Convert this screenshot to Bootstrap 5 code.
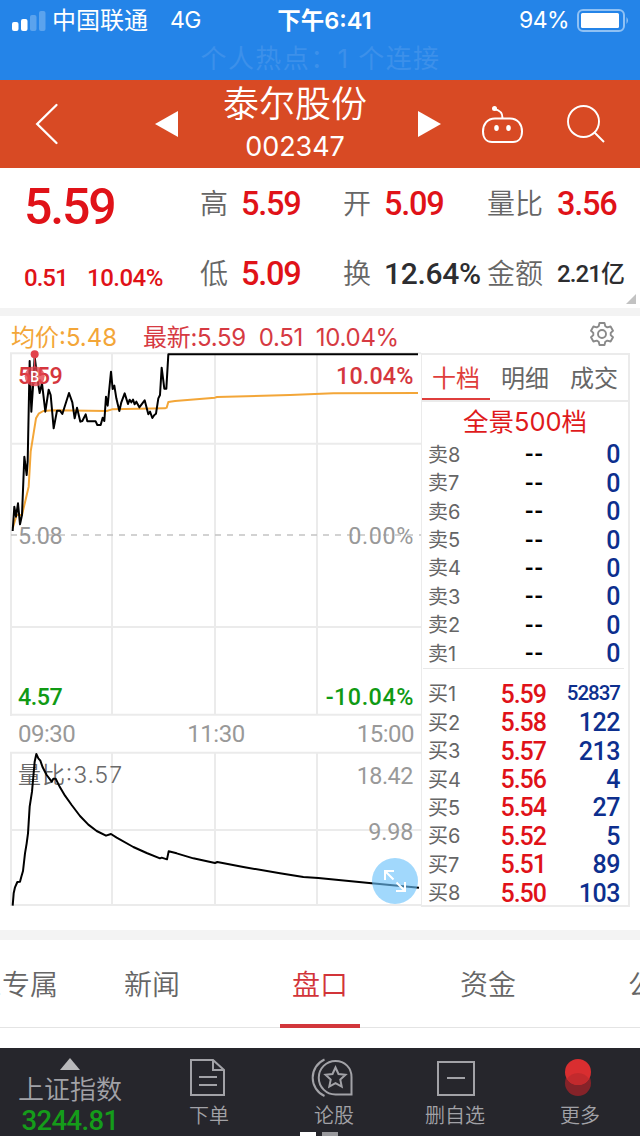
<!DOCTYPE html>
<html lang="zh-CN">
<head>
<meta charset="utf-8">
<meta name="viewport" content="width=device-width, initial-scale=1">
<title>泰尔股份 002347</title>
<link href="https://cdn.jsdelivr.net/npm/bootstrap@5.3.0/dist/css/bootstrap.min.css" rel="stylesheet">
<style>
  body{width:640px;height:1136px;font-family:Inter,"Noto Sans CJK SC",sans-serif;line-height:1;color:#666}
  svg{display:block;overflow:visible}
  .din{font-family:Roboto,"Noto Sans CJK SC",sans-serif;font-weight:500}
  .status-bar{height:80px;background:#2484e8;color:#fff;font-size:23px}
  .status-row{height:40px;padding:1px 12px 0;display:grid;grid-template-columns:263px 99px 1fr}
  .carrier{font-size:24px;margin-left:6px}
  .network{margin-left:22px;letter-spacing:-.5px}
  .clock{font-weight:600;font-size:23.5px}
  .charge{margin-right:8px;letter-spacing:-.6px}
  .hotspot{font-size:26px;color:#3c90ea;height:36px;line-height:38px;letter-spacing:1.4px;padding-left:1px}
  .stock-nav{height:88px;background:#d84a24;display:grid;grid-template-columns:155px 65px 150px 112px 85px 73px;padding:0}
  .stock-name{font-size:36px;height:46px;line-height:48px;font-weight:350}
  .stock-code{font-size:27px;height:40px;line-height:41px;letter-spacing:-.1px}
  .quote{height:140px;display:grid;grid-template-columns:200px 143px 144px 153px;grid-template-rows:70px 70px;align-items:center}
  .quote .cell{display:grid;grid-template-columns:41px 1fr;align-items:center;white-space:nowrap;font-size:28px;font-weight:350;padding-top:2px}
  .quote .wide{grid-template-columns:70px 1fr}
  .quote .val{font-size:32.5px;letter-spacing:-1.2px}
  .up{color:#e01218}
  .last{font-size:50px;letter-spacing:-2.2px}
  .chg{font-size:24px;letter-spacing:-.5px;padding-top:9px}
  .band{background:#f3f3f3}
  .legend{height:37px;font-size:24px;padding:6px 26px 0 11px;white-space:nowrap;letter-spacing:-.3px}
  .charts{width:421px;height:554px}
  .time-axis{height:37px;padding:0 7px 0 18px;font-family:Roboto,sans-serif;font-size:24px;letter-spacing:-.5px;color:#999;line-height:37px;font-weight:400}
  .book{width:209px;height:554px;border:2px solid #ebebeb;border-left-width:1px}
  .book-tabs{height:47px;border-bottom:2px solid #ebebeb;font-size:24px;display:grid;grid-template-columns:68px 70px 1fr}
  .book-tabs>div{line-height:47px;height:47px;text-align:center}
  .book-tabs .on{color:#df3e3c;border-bottom:2px solid #df3e3c;height:45px}
  .full{height:38px;line-height:40px;font-size:25.5px;color:#df1a1c;font-weight:400}
  .level{height:28.45px;display:grid;grid-template-columns:44px 73px 1fr;align-items:center;padding:1px 9px 0 6px;font-size:20px}
  .level .din{font-size:25px;text-align:right;letter-spacing:-1px;margin-right:-1px}
  .level .din.text-black{letter-spacing:1px;margin-right:1px}
  .level .vol{color:#0d2f8e;letter-spacing:-.5px}
  .level .vol.long{font-size:20.5px;letter-spacing:-1px;padding-bottom:1px}
  .asks{border-bottom:1px solid #e8e8e8;margin:0 4px 0 1px;}
  .asks .level{padding:1px 5px 0 5px}
  .bids{padding-top:11px}
  .section-tabs{height:88px;border-bottom:1px solid #e4e4e4;font-size:28px;font-weight:350;margin-left:-100px;width:840px}
  .section-tabs>div{width:168px;line-height:90px;height:88px;text-align:center}
  .section-tabs .on{color:#d23439;position:relative}
  .section-tabs .on::after{content:"";position:absolute;left:44px;right:44px;bottom:0;height:4px;background:#d2363b}
  .dock{height:88px;background:#26262c;color:#a2a2a7;display:grid;grid-template-columns:140px 138px 112px 130px 120px;position:relative;font-size:20px;font-weight:350}
  .dock .item{padding-top:9px;display:flex;flex-direction:column;align-items:center}
  .dock .item svg{height:40px;margin-bottom:9px}
  .index-name{font-size:26px;line-height:30px}
  .index-val{font-size:27.5px;line-height:31px;color:#159c1a;letter-spacing:-.6px}
  .pager{position:absolute;left:300px;bottom:0;gap:6px}
  .pager i{width:16px;height:4px;background:#fff}
  .pager i+i{background:#98989c}
  svg text{font-family:Roboto,"Noto Sans CJK SC",sans-serif;font-size:70px}
</style>
</head>
<body class="bg-white overflow-hidden m-0">

<header>
  <div class="status-bar">
    <div class="status-row align-items-center">
      <div class="d-flex align-items-center">
        <svg width="34" height="22" viewBox="0 0 34 22" fill="#fff"><rect y="12" width="6.500" height="9" rx="2"/><rect x="9" y="9" width="6.500" height="12" rx="2"/><g opacity=".25"><rect x="18" y="5" width="6.500" height="16" rx="2"/><rect x="27" y="1" width="6.500" height="20" rx="2"/></g></svg>
        <span class="carrier">中国联通</span><span class="network">4G</span>
      </div>
      <div class="text-center text-nowrap clock">下午6:41</div>
      <div class="d-flex align-items-center justify-content-end">
        <span class="charge">94%</span>
        <svg width="51" height="23" viewBox="0 0 51 23"><rect x="1" y="1" width="46" height="21" rx="5" fill="none" stroke="#8fc1f4" stroke-width="2"/><rect x="4" y="4" width="38" height="15" rx="1.500" fill="#fff"/><path d="M49.500 8q3 3.500 0 7z" fill="#8fc1f4"/></svg>
      </div>
    </div>
    <div class="hotspot text-center">个人热点：1 个连接</div>
  </div>

  <nav class="stock-nav navbar text-white align-items-center">
    <svg style="margin-left:36px" width="22" height="40" viewBox="0 0 22 40" fill="none" stroke="#fff" stroke-width="2.300" stroke-linecap="round"><path d="M20.500 1 1.200 20 20.500 39"/></svg>
    <svg width="23" height="26" viewBox="0 0 23 26" fill="#fff"><path d="M23 0v26L0 13z"/></svg>
    <div class="text-center h-100">
      <div class="stock-name">泰尔股份</div>
      <div class="stock-code">002347</div>
    </div>
    <svg style="margin-left:48px" width="23" height="26" viewBox="0 0 23 26" fill="#fff"><path d="M0 0v26l23-13z"/></svg>
    <svg width="41" height="38" viewBox="0 0 41 38" fill="none" stroke="#fff" stroke-width="2"><path d="M13 13.500h15c8 0 12 6 12 13 0 7-4 10.500-9 10.500H10c-5 0-9-3.500-9-10.500 0-7 4-13 12-13zM20.500 13c0-5-2-7.500-8-9"/><circle cx="12.500" cy="3.500" r="2.500" fill="#fff" stroke="none"/><g fill="#fff" stroke="none"><ellipse cx="14.500" cy="23" rx="2.300" ry="3"/><ellipse cx="26.500" cy="23" rx="2.300" ry="3"/></g></svg>
    <svg width="38" height="38" viewBox="0 0 38 38" fill="none" stroke="#fff" stroke-width="1.900"><circle cx="16.500" cy="16.500" r="15.500"/><path d="m27 27 10 10"/></svg>
  </nav>
</header>

<main>
  <section class="quote">
    <div class="up din last" style="padding:8px 0 0 24px">5.59</div>
    <div class="cell"><span>高</span><span class="din val up">5.59</span></div>
    <div class="cell"><span>开</span><span class="din val up">5.09</span></div>
    <div class="cell wide"><span>量比</span><span class="din val up">3.56</span></div>
    <div class="up din chg d-flex"><span style="margin-left:24px;width:63px;letter-spacing:-1px">0.51</span><span>10.04%</span></div>
    <div class="cell"><span>低</span><span class="din val up">5.09</span></div>
    <div class="cell"><span>换</span><span class="din" style="font-size:30px;letter-spacing:-.3px;color:#2d2d30">12.64%</span></div>
    <div class="cell wide position-relative"><span>金额</span><span class="din" style="font-size:24px;letter-spacing:-.9px;color:#2d2d30">2.21亿</span>
      <svg class="position-absolute" style="right:4px;bottom:-16px" width="10" height="10" viewBox="0 0 10 10"><path d="M10 0v10H0z" fill="#c2c2c2"/></svg>
    </div>
  </section>

  <div class="band" style="height:8px"></div>

  <section style="height:614px">
    <div class="legend d-flex align-items-center">
      <span style="color:#f3a638;width:132px;letter-spacing:0">均价:5.48</span>
      <span style="color:#d63a42">最新:5.59&nbsp; 0.51&nbsp; 10.04%</span>
      <svg class="ms-auto mb-2" width="24" height="24" viewBox="0 0 24 24" fill="none" stroke="#8a8a8a" stroke-width="1.900" stroke-linejoin="round"><path d="M9.500 1h5l.8 3.200 2 1.200L20.600 4.500 23 8.700l-2.300 2.200v2.200l2.300 2.200-2.400 4.200-3.300-.9-2 1.200-.8 3.200h-5l-.8-3.200-2-1.200-3.300.9L1 15.300l2.300-2.200v-2.200L1 8.700l2.400-4.200 3.300.9 2-1.200z"/><circle cx="12" cy="12" r="4"/></svg>
    </div>

    <div class="d-flex">
      <div class="charts">
        <svg width="421" height="363" viewBox="0 114 1263 1089" fill="none">
          <g stroke="#ebebeb" stroke-width="6"><path d="M33 114V1203M336 114V1199M645 114V1199M951 114V1199M30 115H1263M33 386H1263M33 936H1263M33 1199H1263"/></g>
          <path d="M33 660H1263" stroke="#c4c4c4" stroke-width="4" stroke-dasharray="18 18"/>
          <path stroke="#f3a638" stroke-width="6" stroke-linejoin="round" d="M38 640 50 600 66 600 86 515 92 410 108 310 116 296 130 288 160 286 320 288 336 283 495 280 500 278 505 261 525 258 645 248 651 246 870 240 1000 235 1254 234"/>
          <path stroke="#000" stroke-width="6" stroke-linejoin="round" d="M38 648 43 575 48 605 54 565 60 628 66 600 73 425 80 480 83 440 89 138 94 290 100 200 104 125 112 190 119 234 126 205 136 290 146 224 152 240 161 340 171 287 180 287 187 297 207 234 217 262 224 310 231 278 241 320 247 318 257 298 262 319 287 319 292 330 302 330 308 308 313 318 318 245 323 272 333 170 338 222 343 212 349 250 358 288 364 262 374 235 384 267 389 254 394 262 399 254 404 268 409 260 418 277 434 256 445 298 450 290 457 309 463 300 468 296 475 250 480 240 485 158 493 221 499 221 505 118 1254 118"/>
          <g fill="#d5363d" font-weight="500">
            <text x="54" y="206" textLength="134">5.59</text><text x="1008" y="206" textLength="232">10.04%</text>
          </g>
          <g fill="#e2444d"><circle cx="104" cy="118" r="12"/><path d="M102 118h4v40h-4z"/><circle cx="104" cy="184" r="30" opacity=".8"/></g>
          <text x="91" y="201" fill="#fff" style="font-size:42px;font-weight:500">B</text>
          <g fill="#999"><text x="54" y="688" textLength="134">5.08</text><text x="1045" y="688" textLength="195">0.00%</text></g>
          <g fill="#109a14" font-weight="500"><text x="54" y="1170" textLength="134">4.57</text><text x="977" y="1170" textLength="263">-10.04%</text></g>
        </svg>
        <div class="time-axis d-flex justify-content-between"><span>09:30</span><span>11:30</span><span>15:00</span></div>
        <div class="position-relative">
          <svg width="421" height="154" viewBox="0 219 1263 462" fill="none">
            <path stroke="#ebebeb" stroke-width="6" d="M33 216V678M336 219V675M645 219V675M951 219V675M30 218H1263M33 450H1263M30 675H1263"/>
            <text x="54" y="308" textLength="312" fill="#6a6a6a" style="font-family:Inter,'Noto Sans CJK SC',sans-serif;font-size:69px;font-weight:350">量比:3.57</text>
            <g fill="#999"><text x="1070" y="311" textLength="170">18.42</text><text x="1105" y="479" textLength="135">9.98</text></g>
            <path stroke="#000" stroke-width="6" stroke-linejoin="round" d="M38 677 41 640 45 622 52 606 60 605 64 590 69 573 75 520 80 490 84 460 89 380 96 335 104 245 109 222 115 235 121 242 128 262 140 285 150 298 155 305 160 296 167 296 180 322 195 347 215 375 240 408 265 434 290 453 318 467 333 462 350 473 400 501 440 519 480 535 485 533 501 538 506 514 530 520 580 535 645 549 652 546 730 561 840 580 910 591 955 594 1115 610 1257 623"/>
          </svg>
          <svg class="position-absolute" style="left:372px;top:105px" width="46" height="46" viewBox="0 0 46 46" fill="none" stroke="#fff" stroke-width="2"><circle cx="23" cy="23" r="23" fill="#6ac1fb" fill-opacity=".63" stroke="none"/><path d="M13 22v-9h9M13 13l8.500 8.500M24.500 24.500 33 33M33 24v9h-9"/></svg>
        </div>
      </div>

      <div class="book">
        <div class="book-tabs"><div class="on">十档</div><div>明细</div><div>成交</div></div>
        <div class="full text-center">全景500档</div>
        <div class="asks">
          <div class="level"><span>卖8</span><span class="din text-black">--</span><span class="din vol">0</span></div>
          <div class="level"><span>卖7</span><span class="din text-black">--</span><span class="din vol">0</span></div>
          <div class="level"><span>卖6</span><span class="din text-black">--</span><span class="din vol">0</span></div>
          <div class="level"><span>卖5</span><span class="din text-black">--</span><span class="din vol">0</span></div>
          <div class="level"><span>卖4</span><span class="din text-black">--</span><span class="din vol">0</span></div>
          <div class="level"><span>卖3</span><span class="din text-black">--</span><span class="din vol">0</span></div>
          <div class="level"><span>卖2</span><span class="din text-black">--</span><span class="din vol">0</span></div>
          <div class="level"><span>卖1</span><span class="din text-black">--</span><span class="din vol">0</span></div>
        </div>
        <div class="bids">
          <div class="level"><span>买1</span><span class="din up">5.59</span><span class="din vol long">52837</span></div>
          <div class="level"><span>买2</span><span class="din up">5.58</span><span class="din vol">122</span></div>
          <div class="level"><span>买3</span><span class="din up">5.57</span><span class="din vol">213</span></div>
          <div class="level"><span>买4</span><span class="din up">5.56</span><span class="din vol">4</span></div>
          <div class="level"><span>买5</span><span class="din up">5.54</span><span class="din vol">27</span></div>
          <div class="level"><span>买6</span><span class="din up">5.52</span><span class="din vol">5</span></div>
          <div class="level"><span>买7</span><span class="din up">5.51</span><span class="din vol">89</span></div>
          <div class="level"><span>买8</span><span class="din up">5.50</span><span class="din vol">103</span></div>
        </div>
      </div>
    </div>
  </section>

  <div class="band" style="height:10px"></div>

  <div class="overflow-hidden" style="height:108px">
    <div class="section-tabs d-flex">
      <div class="text-end" style="padding-right:10px">L2专属</div><div>新闻</div><div class="on">盘口</div><div>资金</div><div>公告</div>
    </div>
  </div>
</main>

<footer class="dock">
  <div class="text-center" style="padding-top:10px">
    <svg class="mx-auto" width="20" height="12" viewBox="0 0 20 12"><path d="M10 0l10 12H0z" fill="#b9b9bb"/></svg>
    <div class="index-name" style="margin-top:5px">上证指数</div>
    <div class="index-val din">3244.81</div>
  </div>
  <div class="item">
    <svg width="36" viewBox="0 0 36 40" fill="none" stroke="#a2a2a7" stroke-width="2"><path d="M2 3h20l11 10v25H0V3h2M22 3v10h11M8 20h18M8 28h18"/></svg>下单
  </div>
  <div class="item">
    <svg width="42" viewBox="0 0 42 40" fill="none" stroke="#a2a2a7" stroke-width="2"><path d="M22.500 4C32 4 38.500 11 38.500 20v17.500H22.500a16.700 16.700 0 0 1 0-33.500zM11.500 2.500a20 20 0 0 0 0 36.500"/><path d="m22.500 10.500 3 6.500 7 .8-5.200 4.800 1.400 7-6.200-3.500-6.200 3.500 1.400-7-5.200-4.800 7-.8z"/></svg>论股
  </div>
  <div class="item">
    <svg width="38" viewBox="0 0 38 40" fill="none" stroke="#a2a2a7" stroke-width="2"><rect x="2" y="5" width="36" height="33"/><path d="M11 21h18"/></svg>删自选
  </div>
  <div class="item">
    <svg width="26" viewBox="0 0 26 40"><circle cx="11" cy="26" r="13" fill="#852329"/><circle cx="11" cy="15" r="13" fill="#d92e30"/><path d="M0 22a13 13 0 0 1 22 0a13 13 0 0 1-22 0z" fill="#c22a2d"/></svg>更多
  </div>
  <div class="pager d-flex"><i></i><i></i></div>
</footer>

<script src="https://cdn.jsdelivr.net/npm/bootstrap@5.3.0/dist/js/bootstrap.bundle.min.js"></script>
</body>
</html>
